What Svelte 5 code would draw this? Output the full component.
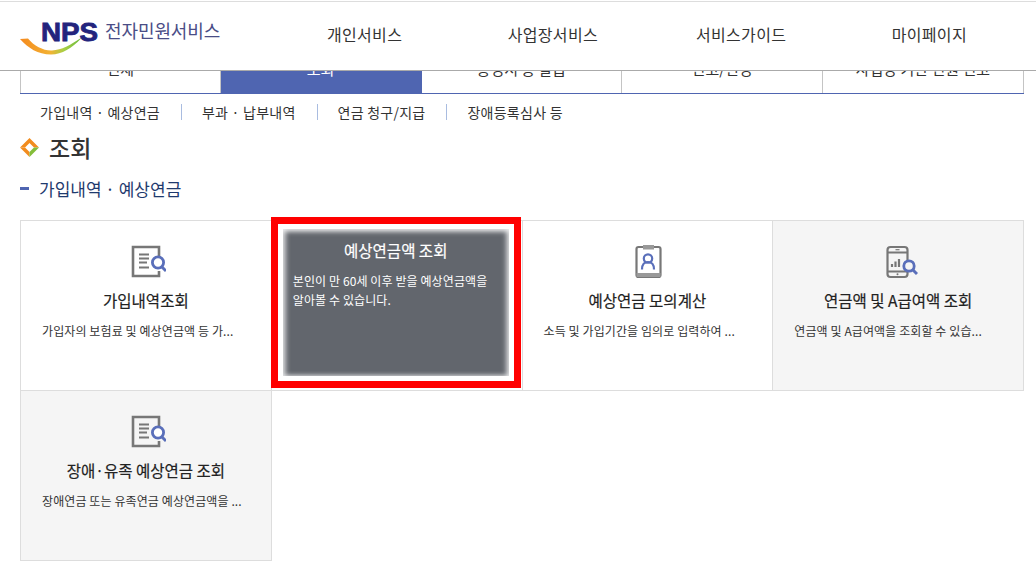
<script>
  const navs = ['개인서비스', '사업장서비스', '서비스가이드', '마이페이지'];
  const tabs = [
    { label: '전체', active: false },
    { label: '조회', active: true },
    { label: '증명서 등 발급', active: false },
    { label: '신고/변경', active: false },
    { label: '사업장 기관 민원 신고', active: false }
  ];
  const subs = ['가입내역 · 예상연금', '부과 · 납부내역', '연금 청구/지급', '장애등록심사 등'];
  const cards = [
    { icon: 'doc', title: '가입내역조회', desc: '가입자의 보험료 및 예상연금액 등 가...', gray: false },
    { hot: true, title: '예상연금액 조회', desc: '본인이 만 60세 이후 받을 예상연금액을 알아볼 수 있습니다.' },
    { icon: 'badge', title: '예상연금 모의계산', desc: '소득 및 가입기간을 임의로 입력하여 ...', gray: false },
    { icon: 'phone', title: '연금액 및 A급여액 조회', desc: '연금액 및 A급여액을 조회할 수 있습...', gray: true },
    { icon: 'doc', title: '장애·유족 예상연금 조회', desc: '장애연금 또는 유족연금 예상연금액을 ...', gray: true }
  ];
</script>

<div class="page">
  <header class="header">
    <div class="topline"></div>
    <div class="bar">
      <div class="logo">
        <svg class="swoosh" width="64" height="22" viewBox="0 0 64 22" aria-hidden="true">
          <defs>
            <linearGradient id="sw" x1="0" x2="1" y1="0" y2="0">
              <stop offset="0" stop-color="#f58a1f" />
              <stop offset="0.5" stop-color="#f2b233" />
              <stop offset="0.72" stop-color="#a8cf45" />
              <stop offset="1" stop-color="#6cbb3c" />
            </linearGradient>
          </defs>
          <path d="M0 4 L8 3.5 C14 11 24 16 32 15.5 C42 15 50 10 61 3 L61 3.5 C52 13 42 19.5 31 19.5 C18 19.5 8 13 0 4 Z" fill="url(#sw)" />
        </svg>
        <span class="nps">NPS</span>
        <span class="logotext">전자민원서비스</span>
      </div>
      <nav class="nav">
        {#each navs as n}
          <span class="navitem">{n}</span>
        {/each}
      </nav>
    </div>
  </header>

  <main class="main">
    <div class="tabs">
      {#each tabs as t}
        <div class="tab" class:active={t.active}>{t.label}</div>
      {/each}
    </div>

    <div class="subnav">
      {#each subs as s}
        <span class="subitem">{s}</span>
      {/each}
    </div>

    <h1 class="heading">
      <svg width="19" height="19" viewBox="0 0 19 19" aria-hidden="true">
        <path d="M9.5 0 L19 9.5 L14 9.5 L9.5 5 L5 9.5 L0 9.5 Z" fill="#f28c1e" />
        <path d="M0 9.5 L5 9.5 L9.5 14 L9.5 19 Z" fill="#f28c1e" />
        <path d="M19 9.5 L14 9.5 L9.5 14 L9.5 19 Z" fill="#84bd3a" />
      </svg>
      조회
    </h1>

    <h2 class="subhead"><span class="dash"></span>가입내역 · 예상연금</h2>

    <div class="grid">
      {#each cards as c}
        <div class="card" class:gray={c.gray}>
          {#if c.hot}
            <div class="annot">
              <div class="hot">
                <div class="hottitle">{c.title}</div>
                <p class="hotdesc">{c.desc}</p>
              </div>
            </div>
          {:else}
            <svg class="icon" width="40" height="36" viewBox="0 0 40 36" aria-hidden="true">
              {#if c.icon === 'doc'}
                <path d="M33 13 V3 H7 V32 H33 V27" fill="none" stroke="#777" stroke-width="2.6" />
                <path d="M13 10.5 H23 M13 14.5 H23 M13 18.5 H21 M13 23.5 H23" stroke="#777" stroke-width="2" fill="none" />
                <circle cx="32" cy="18.5" r="5.6" fill="#fff" stroke="#5a6fba" stroke-width="2.8" />
                <path d="M36 23 L40 27" stroke="#5a6fba" stroke-width="3" fill="none" />
              {:else if c.icon === 'badge'}
                <rect x="9.5" y="3" width="24" height="30" rx="2" fill="none" stroke="#777" stroke-width="2.2" />
                <rect x="16" y="1" width="11" height="4.5" fill="#999" />
                <rect x="9.5" y="29" width="24" height="4" fill="#999" />
                <circle cx="21" cy="14.5" r="4.2" fill="none" stroke="#5a6fba" stroke-width="2.2" />
                <path d="M15 25.5 C15 20 17.5 18 21 18 C24.5 18 27 20 27 25.5" fill="none" stroke="#5a6fba" stroke-width="2.2" />
              {:else}
                <rect x="9.5" y="3" width="20" height="30" rx="3" fill="none" stroke="#777" stroke-width="2.2" />
                <path d="M9.5 8.5 H29.5 M9.5 27.5 H29.5" stroke="#777" stroke-width="1.8" />
                <path d="M17.5 5.7 H21.5" stroke="#777" stroke-width="1.2" />
                <circle cx="19.5" cy="30.2" r="1" fill="#777" />
                <path d="M14 20 V23 M17.5 17.5 V23 M21 15 V23" stroke="#777" stroke-width="2.2" />
                <circle cx="31" cy="22" r="5.2" fill="#f5f5f5" stroke="#5a6fba" stroke-width="2.8" />
                <path d="M35 26 L39 30" stroke="#5a6fba" stroke-width="3" />
              {/if}
            </svg>
            <div class="title">{c.title}</div>
            <p class="desc">{c.desc}</p>
          {/if}
        </div>
      {/each}
    </div>
  </main>
</div>

<style>
  :global(body) {
    margin: 0;
    background: #fff;
    overflow: hidden;
  }
  .page {
    width: 1036px;
    height: 575px;
    overflow: hidden;
    font-family: "Noto Sans CJK KR", "Noto Sans", "Liberation Sans", sans-serif;
    color: #333;
  }
  .header {
    position: relative;
    z-index: 2;
    height: 71px;
    box-sizing: border-box;
    padding-top: 1px;
    background: #fff;
    border-bottom: 1px solid #aaa;
  }
  .topline {
    height: 1px;
    background: #ddd;
  }
  .bar {
    display: flex;
    padding: 0 12.5px 0 0;
  }
  .logo {
    position: relative;
    flex: none;
    width: 270.5px;
    height: 68px;
    display: flex;
    align-items: flex-start;
  }
  .swoosh {
    position: absolute;
    left: 20px;
    top: 33px;
  }
  .nps {
    margin: 16px 0 0 41px;
    font: 700 25px/28px "Liberation Sans", sans-serif;
    color: #23247d;
    -webkit-text-stroke: 0.8px #23247d;
    transform: scaleX(1.11);
    transform-origin: left center;
    width: 52px;
  }
  .logotext {
    margin: 14px 0 0 12px;
    font-size: 18px;
    line-height: 28px;
    color: #4a4d86;
    letter-spacing: -0.1px;
    white-space: nowrap;
  }
  .nav {
    flex: 1;
    display: grid;
    grid-template-columns: repeat(4, 1fr);
  }
  .navitem {
    text-align: center;
    font-size: 16px;
    line-height: 64px;
    letter-spacing: 0.3px;
    color: #333;
  }
  .main {
    padding-left: 20px;
  }
  .tabs {
    display: grid;
    grid-template-columns: repeat(5, 200.75px);
    width: 1004px;
    box-sizing: border-box;
    height: 50px;
    margin-top: -27px;
    border-bottom: 1px solid #4f65b1;
  }
  .tab {
    border-right: 1px solid #c4c4c4;
    text-align: center;
    font-size: 15px;
    line-height: 49px;
    color: #333;
  }
  .tab:first-child {
    border-left: 1px solid #c4c4c4;
  }
  .tab.active {
    background: #4f65b1;
    color: #fff;
    border-right-color: #4f65b1;
  }
  .subnav {
    display: flex;
    height: 36px;
    align-items: center;
  }
  .subitem {
    font-size: 14px;
    line-height: 16px;
    letter-spacing: 0.25px;
    color: #333;
    padding: 0 21px 0 20px;
    border-right: 1px solid #a9bce0;
  }
  .subitem:last-child {
    border-right: 0;
  }
  .heading {
    display: flex;
    align-items: center;
    gap: 10px;
    height: 36px;
    margin: -1px 0 0;
    font-size: 23px;
    font-weight: 500;
    color: #333;
  }
  .subhead {
    display: flex;
    align-items: center;
    gap: 10px;
    height: 32px;
    margin: 7px 0 16px;
    font-size: 17px;
    font-weight: 400;
    color: #1f3a6e;
  }
  .dash {
    width: 9px;
    height: 3px;
    background: #4f65b1;
  }
  .grid {
    display: grid;
    grid-template-columns: repeat(4, 250.75px);
    grid-auto-rows: 170px;
  }
  .card {
    position: relative;
    box-sizing: border-box;
    margin: 0 -1px -1px 0;
    border: 1px solid #ddd;
    display: flex;
    flex-direction: column;
    align-items: center;
    padding-top: 23px;
    background: #fff;
  }
  .card.gray {
    background: #f5f5f5;
  }
  .icon {
    flex: none;
  }
  .title {
    margin-top: 9px;
    font-size: 15.5px;
    font-weight: 400;
    line-height: 22px;
    color: #222;
    white-space: nowrap;
    -webkit-text-stroke: 0.2px #222;
  }
  .desc {
    align-self: stretch;
    margin: 10px 0 0;
    padding-left: 21px;
    font-size: 12px;
    line-height: 20px;
    letter-spacing: 0.1px;
    color: #333;
    white-space: nowrap;
  }
  .annot {
    position: absolute;
    z-index: 1;
    left: -1px;
    top: -4px;
    width: 250px;
    height: 171px;
    box-sizing: border-box;
    border: 7px solid #f00;
    padding: 5px;
    background: #fff;
  }
  .hot {
    height: 100%;
    box-sizing: border-box;
    padding: 10px 10px;
    background: #62666d;
    box-shadow: inset 0 3px 5px 0 rgba(255, 255, 255, 0.6), inset 3px 0 5px 0 rgba(255, 255, 255, 0.6), inset -3px 0 5px 0 rgba(255, 255, 255, 0.6);
    color: #fff;
  }
  .hottitle {
    text-align: center;
    font-size: 15.5px;
    font-weight: 400;
    line-height: 22px;
    -webkit-text-stroke: 0.2px #fff;
  }
  .hotdesc {
    margin: 10px 0 0;
    font-size: 12px;
    line-height: 19px;
    letter-spacing: 0.1px;
  }
</style>
